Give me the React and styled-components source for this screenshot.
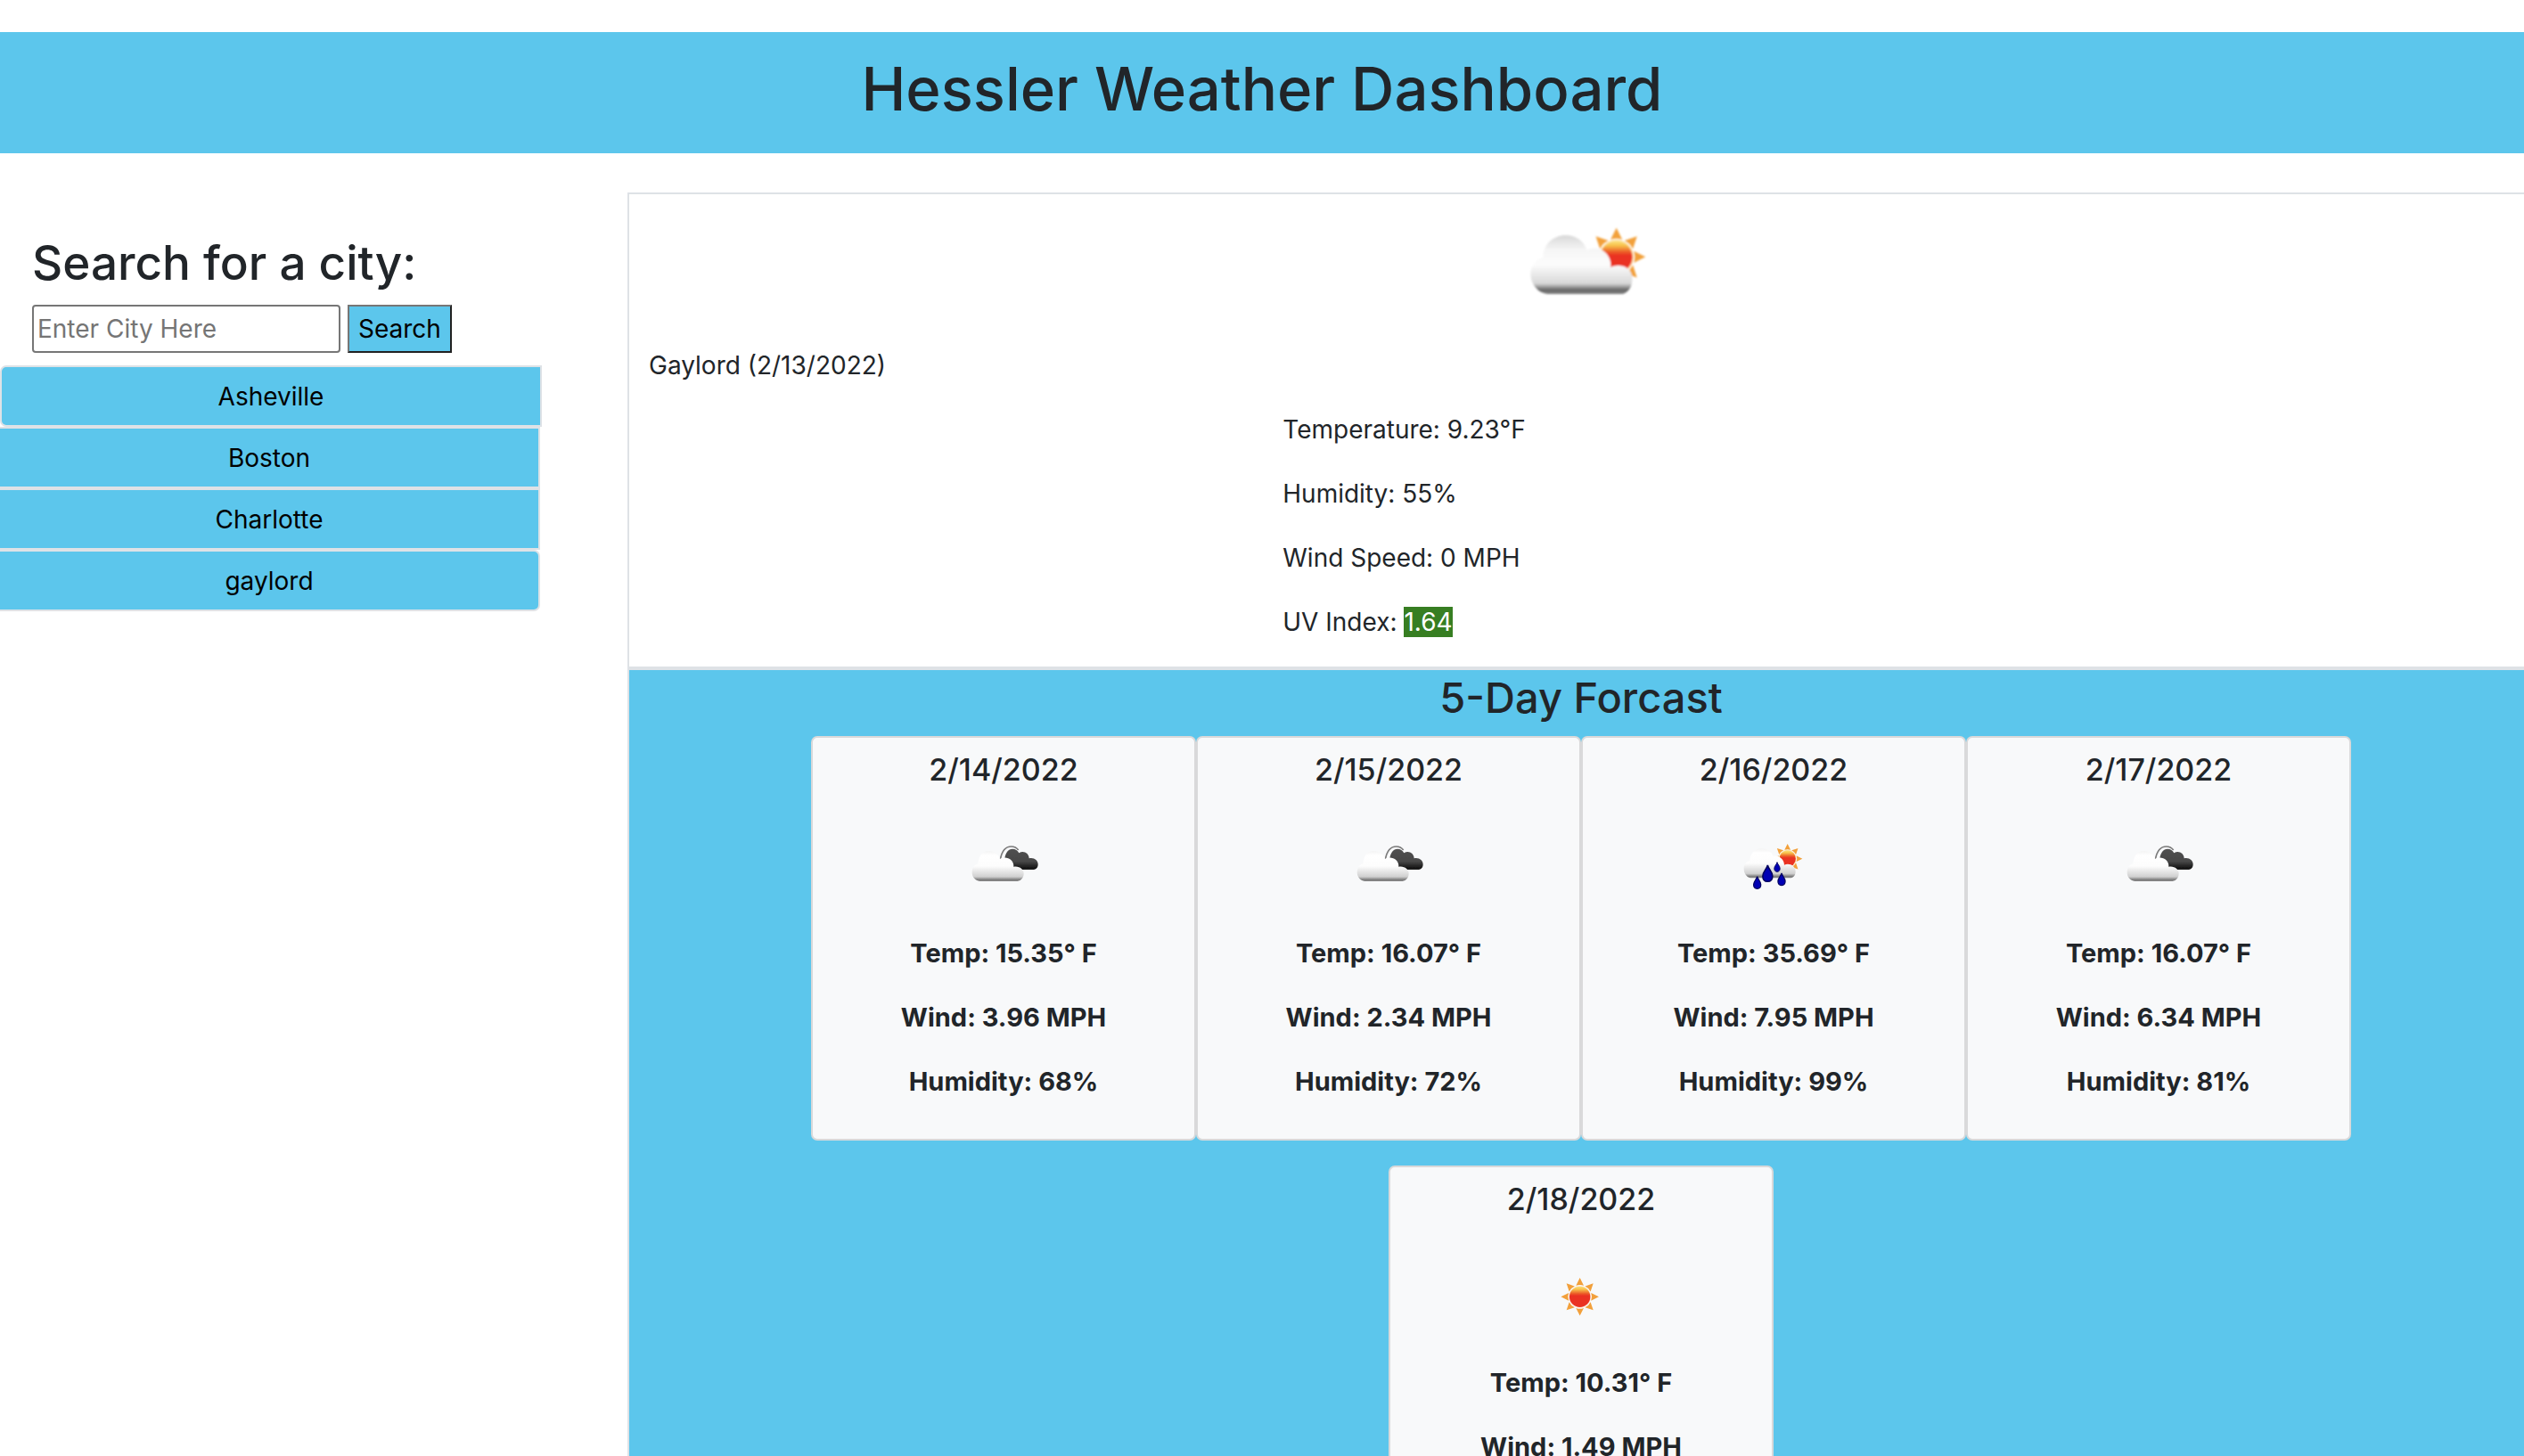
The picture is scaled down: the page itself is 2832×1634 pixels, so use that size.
import React, { useId } from "react";
import styled, { createGlobalStyle, css } from "styled-components";

const sky = "#5cc6ec";
const ink = "#212529";
const line = "#dee2e6";

const GlobalStyle = createGlobalStyle`
  *, *::before, *::after { box-sizing: border-box; }
  body {
    margin: 0;
    background: #fff;
    color: ${ink};
    font-family: Inter, "Liberation Sans", sans-serif;
    font-size: 28px;
    line-height: 44px;
  }
  h1, h2, h3, h4, p, ul { margin: 0; padding: 0; }
  h1, h2, h3, h4 { font-weight: 500; }
  button, input { font: inherit; margin: 0; }
`;

const Page = styled.div`
  padding-top: 36px;
  overflow-x: clip;
`;

const Header = styled.header`
  padding: 20px 0 28px;
  background: ${sky};
  text-align: center;
`;

const Title = styled.h1`
  font-size: 67px;
  line-height: 88px;
`;

const Columns = styled.div`
  display: flex;
  align-items: stretch;
  margin-top: 44px;
`;

const Sidebar = styled.aside`
  flex: 0 0 704px;
  padding-top: 44px;
`;

const SearchForm = styled.form`
  padding: 0 36px;
`;

const SearchTitle = styled.h2`
  margin-bottom: 12px;
  font-size: 53px;
  line-height: 70px;
`;

const SearchRow = styled.div`
  display: flex;
  gap: 8px;
`;

const CityInput = styled.input`
  width: 346px;
  height: 54px;
  padding: 2px 4px;
  border: 2px solid #767676;
  border-radius: 4px;
  background: #fff;
  color: #000;
  &::placeholder { color: #757575; opacity: 1; }
`;

const SearchButton = styled.button`
  height: 54px;
  padding: 0 10px;
  border: 2px solid;
  border-color: #767676 #212121 #212121 #767676;
  background: ${sky};
  color: #000;
`;

const History = styled.ul`
  width: 608px;
  margin-top: 14px;
  list-style: none;
`;

const HistoryItem = styled.li`
  & + & { margin: 0 2px 0 -2px; }
  &:first-child button { border-radius: 7px 0 0 7px; }
  &:last-child button { border-radius: 0 7px 7px 0; }
`;

const HistoryButton = styled.button`
  display: block;
  width: 100%;
  height: 69px;
  padding: 0;
  border: 2px solid ${line};
  background: ${sky};
  color: #000;
  text-align: center;
`;

const Main = styled.main`
  flex: 1;
  min-width: 0;
  margin-right: -12px;
`;

const panel = css`
  border: 2px solid ${line};
`;

const Current = styled.section`
  ${panel}
  padding: 0 22px;
`;

const CurrentIcon = styled.div`
  display: flex;
  justify-content: center;
  height: 170px;
`;

const Line = styled.p`
  margin-bottom: 28px;
`;

const Readings = styled.div`
  padding-left: 34%;
`;

const UvBadge = styled.span`
  background: #377e22;
  color: #fff;
`;

const Forecast = styled.section`
  ${panel}
  background: ${sky};
`;

const ForecastTitle = styled.h3`
  margin-bottom: 12px;
  font-size: 47px;
  line-height: 62px;
  text-align: center;
`;

const Cards = styled.div`
  display: flex;
  flex-wrap: wrap;
  justify-content: center;
  padding: 0 200px;
`;

const Card = styled.article`
  width: 432px;
  margin-bottom: 28px;
  padding: 14px 0;
  border: 2px solid rgba(0, 0, 0, 0.125);
  border-radius: 7px;
  background: #f8f9fa;
  background-clip: border-box;
  text-align: center;
  font-size: 29px;
  font-weight: 700;
`;

const CardDate = styled.h4`
  font-size: 34px;
  line-height: 44px;
`;

const CardIcon = styled.div`
  display: flex;
  justify-content: center;
  padding: 42px 0 30px;
`;

function Drawing({ label, width, height, viewBox, blur, children }) {
  const id = useId();
  const ref = (name) => `url(#${id}${name})`;
  return (
    <svg width={width} height={height} viewBox={viewBox} role="img" aria-label={label}>
      <defs>
        <linearGradient id={`${id}cloud`} x1="0" y1="0" x2="0" y2="1">
          <stop offset="0" stopColor="#d8d8d8" />
          <stop offset="0.25" stopColor="#f6f6f6" />
          <stop offset="0.5" stopColor="#fcfcfc" />
          <stop offset="0.82" stopColor="#d8d8d8" />
          <stop offset="0.93" stopColor="#666" />
          <stop offset="1" stopColor="#858585" />
        </linearGradient>
        <linearGradient id={`${id}small`} x1="0" y1="0" x2="0" y2="1">
          <stop offset="0" stopColor="#f4f4f4" />
          <stop offset="0.15" stopColor="#fff" />
          <stop offset="0.5" stopColor="#fdfdfd" />
          <stop offset="0.85" stopColor="#d0d0d0" />
          <stop offset="0.95" stopColor="#7c7c7c" />
          <stop offset="1" stopColor="#8a8a8a" />
        </linearGradient>
        <linearGradient id={`${id}dark`} x1="0" y1="0" x2="0" y2="1">
          <stop offset="0" stopColor="#505050" />
          <stop offset="0.6" stopColor="#484848" />
          <stop offset="0.95" stopColor="#101010" />
          <stop offset="1" stopColor="#333" />
        </linearGradient>
        <linearGradient id={`${id}sun`} x1="0" y1="0" x2="0" y2="1">
          <stop offset="0" stopColor="#fbe27c" />
          <stop offset="0.15" stopColor="#f7c04a" />
          <stop offset="0.35" stopColor="#ec5a28" />
          <stop offset="0.45" stopColor="#ea3323" />
          <stop offset="1" stopColor="#ea3323" />
        </linearGradient>
        <filter id={`${id}soft`} x="-10%" y="-10%" width="120%" height="120%">
          <feGaussianBlur stdDeviation={blur} />
        </filter>
      </defs>
      <g filter={ref("soft")}>{children(ref)}</g>
    </svg>
  );
}

function Sun({ x, y, scale, fill, halo }) {
  return (
    <g transform={`translate(${x} ${y}) scale(${scale})`}>
      {[0, 45, 90, 135, 180, 225, 270, 315].map((angle) => (
        <path key={angle} d="M0-98 20-58Q0-66-20-58Z" fill="#f2a03a" transform={`rotate(${angle})`} />
      ))}
      <circle r="58" fill={halo} />
      <circle r="54" fill={fill} />
    </g>
  );
}

function FewClouds() {
  return (
    <Drawing label="Few clouds" width="180" height="170" viewBox="72 24 540 510" blur="2.4">
      {(ref) => (
        <>
          <Sun x={461} y={235} scale={1} fill={ref("sun")} halo="#fde3a8" />
          <path
            fill={ref("cloud")}
            d="M228 360C196 356 172 326 172 292C172 266 188 246 214 236C214 194 248 162 290 162C324 162 350 180 362 212C374 204 398 204 412 212C432 222 444 244 442 270C452 262 484 260 498 274C512 284 516 300 514 316C512 338 500 356 482 360Z"
          />
        </>
      )}
    </Drawing>
  );
}

function BrokenClouds() {
  return (
    <Drawing label="Broken clouds" width="90" height="90" viewBox="123 54 270 270" blur="1.6">
      {(ref) => (
        <>
          <path d="M247 164C252 136 266 120 284 120C294 120 302 124 308 132" fill="none" stroke="#7a7a7a" strokeWidth="5" />
          <path
            fill={ref("dark")}
            d="M262 160C264 142 274 128 288 128C298 128 306 134 310 142C326 132 344 144 344 160C360 156 374 166 374 180C374 192 366 198 356 198H306L280 184Z"
          />
          <path
            fill={ref("small")}
            d="M178 237C162 235 152 222 152 207C152 192 160 182 172 178C174 152 186 135 208 135C228 135 241 146 246 162C266 150 294 164 292 188C310 184 326 196 326 211C326 225 318 235 305 237Z"
          />
        </>
      )}
    </Drawing>
  );
}

function Drop({ x, y, scale }) {
  return (
    <path
      transform={`translate(${x} ${y}) scale(${scale})`}
      d="M0 0C3 14 17 22 17 38C17 50 10 57 0 57C-10 57-17 50-17 38C-17 22-3 14 0 0Z"
      fill="#0000b4"
      stroke="#00005e"
      strokeWidth="5"
    />
  );
}

function RainAndSun() {
  return (
    <Drawing label="Rain" width="90" height="90" viewBox="75 24 270 270" blur="1.3">
      {(ref) => (
        <>
          <Sun x={257} y={131} scale={0.51} fill={ref("sun")} halo="#fde3a8" />
          <path
            fill={ref("small")}
            d="M132 196C118 192 110 180 110 164C110 150 116 142 130 137C132 112 148 97 170 97C190 97 203 108 208 122C228 118 246 134 246 152C264 144 284 156 284 174C284 186 278 194 268 196Z"
          />
          <Drop x={155} y={191} scale={0.72} />
          <Drop x={190} y={153} scale={0.96} />
          <Drop x={222} y={143} scale={0.56} />
          <Drop x={237} y={180} scale={0.72} />
        </>
      )}
    </Drawing>
  );
}

function ClearSky() {
  return (
    <Drawing label="Clear sky" width="90" height="90" viewBox="27 0 270 270" blur="1.3">
      {(ref) => <Sun x={158} y={136} scale={0.65} fill={ref("sun")} halo="#fdeee0" />}
    </Drawing>
  );
}

const cities = ["Asheville", "Boston", "Charlotte", "gaylord"];

const days = [
  { date: "2/14/2022", Icon: BrokenClouds, lines: ["Temp: 15.35° F", "Wind: 3.96 MPH", "Humidity: 68%"] },
  { date: "2/15/2022", Icon: BrokenClouds, lines: ["Temp: 16.07° F", "Wind: 2.34 MPH", "Humidity: 72%"] },
  { date: "2/16/2022", Icon: RainAndSun, lines: ["Temp: 35.69° F", "Wind: 7.95 MPH", "Humidity: 99%"] },
  { date: "2/17/2022", Icon: BrokenClouds, lines: ["Temp: 16.07° F", "Wind: 6.34 MPH", "Humidity: 81%"] },
  { date: "2/18/2022", Icon: ClearSky, lines: ["Temp: 10.31° F", "Wind: 1.49 MPH"] },
];

export default function App() {
  return (
    <>
      <GlobalStyle />
      <Page>
        <Header>
          <Title>Hessler Weather Dashboard</Title>
        </Header>
        <Columns>
          <Sidebar>
            <SearchForm onSubmit={(event) => event.preventDefault()}>
              <SearchTitle>
                <label htmlFor="city">Search for a city:</label>
              </SearchTitle>
              <SearchRow>
                <CityInput id="city" type="text" placeholder="Enter City Here" />
                <SearchButton type="submit">Search</SearchButton>
              </SearchRow>
            </SearchForm>
            <History>
              {cities.map((city) => (
                <HistoryItem key={city}>
                  <HistoryButton type="button">{city}</HistoryButton>
                </HistoryItem>
              ))}
            </History>
          </Sidebar>
          <Main>
            <Current>
              <CurrentIcon>
                <FewClouds />
              </CurrentIcon>
              <Line>Gaylord (2/13/2022)</Line>
              <Readings>
                <Line>Temperature: 9.23°F</Line>
                <Line>Humidity: 55%</Line>
                <Line>Wind Speed: 0 MPH</Line>
                <Line>
                  UV Index: <UvBadge>1.64</UvBadge>
                </Line>
              </Readings>
            </Current>
            <Forecast>
              <ForecastTitle>5-Day Forcast</ForecastTitle>
              <Cards>
                {days.map(({ date, Icon, lines }) => (
                  <Card key={date}>
                    <CardDate>{date}</CardDate>
                    <CardIcon>
                      <Icon />
                    </CardIcon>
                    {lines.map((text) => (
                      <Line key={text}>{text}</Line>
                    ))}
                  </Card>
                ))}
              </Cards>
            </Forecast>
          </Main>
        </Columns>
      </Page>
    </>
  );
}
